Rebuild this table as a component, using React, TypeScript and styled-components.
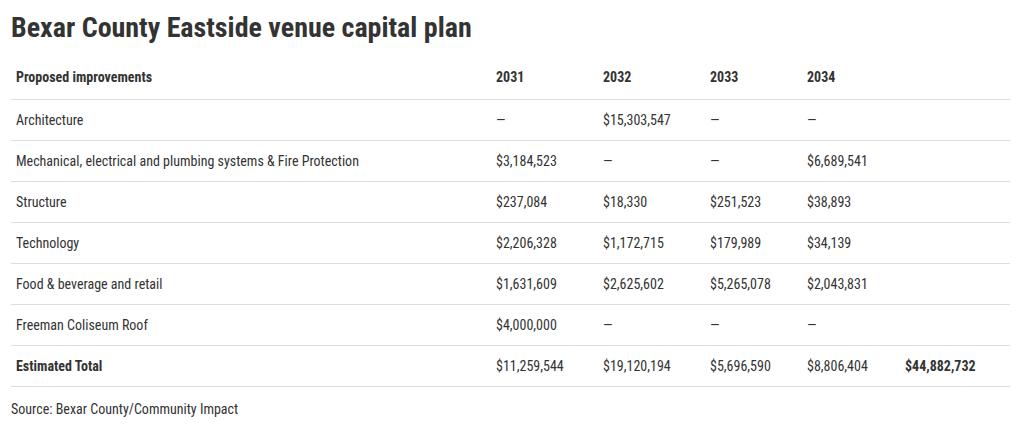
import React from 'react';
import styled, { createGlobalStyle } from 'styled-components';

const GlobalStyle = createGlobalStyle`
  html, body {
    margin: 0;
    padding: 0;
    background: #ffffff;
  }
  body {
    font-family: "Roboto Condensed", "Liberation Sans Narrow", "DejaVu Sans Condensed", sans-serif;
    color: #333333;
  }
`;

const Wrapper = styled.div`
  padding: 0 10px 0 11px;
`;

const Title = styled.h1`
  margin: 0;
  padding-top: 9px;
  font-size: 28px;
  line-height: 38px;
  font-weight: 700;
  color: #333333;
`;

const Table = styled.table`
  width: 999px;
  table-layout: fixed;
  margin-top: 9px;
  border-collapse: collapse;
  font-size: 14px;
`;

const HeadCell = styled.th<{ $w: number }>`
  text-align: left;
  font-weight: 700;
  height: 43px;
  padding: 0 5px;
  border-bottom: 1px solid #dddddd;
  width: ${(p) => p.$w}px;
  box-sizing: border-box;
`;

const Row = styled.tr`
  border-bottom: 1px solid #dddddd;
`;

const Cell = styled.td<{ $bold?: boolean }>`
  height: 40px;
  padding: 0 5px;
  font-weight: ${(p) => (p.$bold ? 700 : 400)};
  white-space: nowrap;
`;

const Source = styled.p`
  margin: 14px 0 0;
  font-size: 14px;
  color: #333333;
`;

const years = ['2031', '2032', '2033', '2034'];
const widths = [480, 107, 107, 97, 98, 110];

const rows: { label: string; values: string[]; total?: string; bold?: boolean }[] = [
  { label: 'Architecture', values: ['—', '$15,303,547', '—', '—'] },
  {
    label: 'Mechanical, electrical and plumbing systems & Fire Protection',
    values: ['$3,184,523', '—', '—', '$6,689,541'],
  },
  { label: 'Structure', values: ['$237,084', '$18,330', '$251,523', '$38,893'] },
  { label: 'Technology', values: ['$2,206,328', '$1,172,715', '$179,989', '$34,139'] },
  { label: 'Food & beverage and retail', values: ['$1,631,609', '$2,625,602', '$5,265,078', '$2,043,831'] },
  { label: 'Freeman Coliseum Roof', values: ['$4,000,000', '—', '—', '—'] },
  {
    label: 'Estimated Total',
    values: ['$11,259,544', '$19,120,194', '$5,696,590', '$8,806,404'],
    total: '$44,882,732',
    bold: true,
  },
];

export default function App() {
  return (
    <>
      <GlobalStyle />
      <Wrapper>
        <Title>Bexar County Eastside venue capital plan</Title>
        <Table>
          <thead>
            <tr>
              <HeadCell $w={widths[0]}>Proposed improvements</HeadCell>
              {years.map((y, i) => (
                <HeadCell key={y} $w={widths[i + 1]}>
                  {y}
                </HeadCell>
              ))}
              <HeadCell $w={widths[5]} />
            </tr>
          </thead>
          <tbody>
            {rows.map((r) => (
              <Row key={r.label}>
                <Cell $bold={r.bold}>{r.label}</Cell>
                {r.values.map((v, i) => (
                  <Cell key={i}>{v}</Cell>
                ))}
                <Cell $bold>{r.total ?? ''}</Cell>
              </Row>
            ))}
          </tbody>
        </Table>
        <Source>Source: Bexar County/Community Impact</Source>
      </Wrapper>
    </>
  );
}
